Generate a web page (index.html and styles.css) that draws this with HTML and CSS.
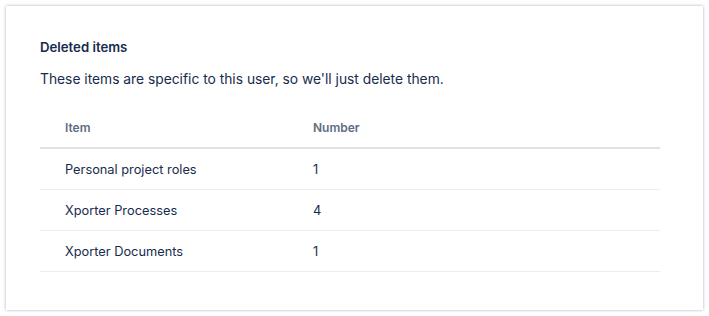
FILE: index.html
```html
<!DOCTYPE html>
<html lang="en">
<head>
    <meta charset="UTF-8">
    <title>Deleted items</title>
    <link rel="stylesheet" href="styles.css">
</head>
<body>
<div class="card">
    <h2>Deleted items</h2>
    <p class="desc">These items are specific to this user, so we'll just delete them.</p>
    <table class="items">
        <thead>
            <tr>
                <th class="col-item">Item</th>
                <th>Number</th>
            </tr>
        </thead>
        <tbody>
            <tr><td>Personal project roles</td><td>1</td></tr>
            <tr><td>Xporter Processes</td><td>4</td></tr>
            <tr><td>Xporter Documents</td><td>1</td></tr>
        </tbody>
    </table>
</div>
</body>
</html>
```

FILE: styles.css
```css
body {
    margin: 0;
    padding: 6px;
    background: #ffffff;
    font-family: 'Inter', 'Liberation Sans', sans-serif;
    color: #172b4d;
}
.card {
    background: #ffffff;
    height: 304px;
    box-sizing: border-box;
    padding: 33px 43px 0 34px;
    box-shadow: 0 0 3px rgba(9, 30, 66, 0.35);
}
h2 {
    margin: 0;
    font-size: 13.2px;
    font-weight: 600;
    line-height: 16px;
}
.desc {
    margin: 14px 0 0;
    font-size: 13.8px;
    line-height: 20px;
}
.items {
    width: 100%;
    margin-top: 30px;
    border-collapse: collapse;
    font-size: 12.8px;
}
.items th {
    text-align: left;
    font-size: 12px;
    font-weight: 600;
    color: #5e6c84;
    padding: 0 25px 12px;
    height: 16px;
    border-bottom: 2px solid #dfe1e6;
}
.items th.col-item {
    width: 198px;
}
.items td {
    padding: 0 25px;
    height: 40px;
    border-bottom: 1px solid #ebecf0;
}
```
